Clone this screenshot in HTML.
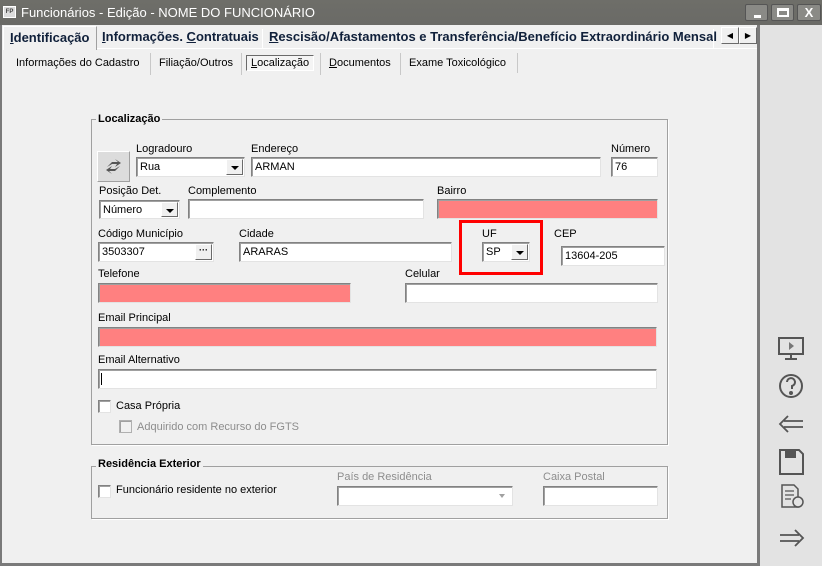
<!DOCTYPE html><html><head><meta charset="utf-8"><style>
*{box-sizing:border-box;margin:0;padding:0}
body{width:822px;height:566px;position:relative;background:#f0f0f0;font-family:"Liberation Sans",sans-serif;font-size:11px;color:#000;overflow:hidden}
.a{position:absolute;white-space:nowrap}
.in{position:absolute;background:#fff;border:1px solid;border-color:#828282 #e3e3e3 #e3e3e3 #828282;box-shadow:inset 1px 1px 0 #a0a0a0;padding:3px 0 0 3px;font-size:11px}
.pk{background:#ff8080}
.dd{position:absolute;right:1px;top:1px;bottom:1px;width:17px;background:#f0f0f0;border:1px solid;border-color:#fff #6a6a6a #6a6a6a #fff}
.dd:after{content:"";position:absolute;left:4px;top:6px;border-left:4px solid transparent;border-right:4px solid transparent;border-top:4px solid #000}
.dd.el:after{display:none}
.dd.dis{border:none;background:#fff}
.dd.dis:after{border-top-color:#a0a0a0;border-left-width:3px;border-right-width:3px;left:5px}
.gb{position:absolute;border:1px solid #a0a0a0;box-shadow:1px 1px 0 #fff}
.lg{position:absolute;font-weight:bold;background:#f0f0f0;padding:0 2px}
.cb{position:absolute;width:13px;height:13px;background:#fff;border:1px solid;border-color:#828282 #e3e3e3 #e3e3e3 #828282;box-shadow:inset 1px 1px 0 #a0a0a0}
.st{position:absolute;top:53px;height:22px;border-left:1px solid #c8c8c8;padding:4px 8px 0;font-size:11px}
u{text-decoration:underline}
.tb{position:absolute;top:29px;font-weight:bold;font-size:13px;color:#10203a}
.sep{position:absolute;top:29px;width:1px;height:19px;background:#a0a0a0;border-right:1px solid #fff}
</style></head><body>
<div class="a" style="left:0;top:0;width:822px;height:25px;background:linear-gradient(#6e6e69,#6a6a66)"></div>
<div class="a" style="left:3px;top:6px;width:13px;height:12px;background:#dcdcdc;border:1px solid #fff;font-size:6px;font-weight:bold;color:#444;line-height:10px;text-align:center">FP</div>
<div class="a" style="left:21px;top:5px;color:#fff;font-size:13px">Funcionários - Edição - NOME DO FUNCIONÁRIO</div>
<div class="a" style="left:745px;top:4px;width:23px;height:17px;border:1px solid #555;background:#8a8a86;border-radius:2px"><div class="a" style="left:8px;top:10px;width:7px;height:3px;background:#fff"></div></div>
<div class="a" style="left:771px;top:4px;width:23px;height:17px;border:1px solid #555;background:#8a8a86;border-radius:2px"><div class="a" style="left:5px;top:3px;width:12px;height:9px;border:2px solid #fff;border-top-width:3px"></div></div>
<div class="a" style="left:797px;top:4px;width:24px;height:17px;border:1px solid #555;background:#8a8a86;border-radius:2px;color:#fff;font-weight:bold;font-size:13px;text-align:center;line-height:15px">X</div>
<div class="a" style="left:757px;top:25px;width:3px;height:541px;background:#7a7a7a"></div>
<div class="a" style="left:760px;top:25px;width:62px;height:541px;background:#e3e3e3"></div>
<div class="a" style="left:0;top:25px;height:541px;background:#7a7a7a;width:2px"></div>
<div class="a" style="left:0;top:563px;width:760px;height:3px;background:#7a7a7a"></div>
<div class="a" style="left:3px;top:48px;width:754px;height:1px;background:#fff"></div>
<div class="a" style="left:3px;top:26px;width:94px;height:24px;background:#f0f0f0;border:1px solid #fff;border-right-color:#a0a0a0;border-bottom:none"></div>
<div class="tb" style="left:10px;top:30px"><u>I</u>dentificação</div>
<div class="tb" style="left:102px"><u>I</u>nformações. <u>C</u>ontratuais</div>
<div class="sep" style="left:262px"></div>
<div class="tb" style="left:269px"><u>R</u>escisão/Afastamentos e Transferência/Benefício Extraordinário Mensal</div>
<div class="sep" style="left:713px"></div>
<div class="a" style="left:721px;top:27px;width:18px;height:17px;background:#f0f0f0;border:1px solid;border-color:#fff #6a6a6a #6a6a6a #fff;font-size:8px;text-align:center;line-height:15px">◀</div>
<div class="a" style="left:739px;top:27px;width:18px;height:17px;background:#f0f0f0;border:1px solid;border-color:#fff #6a6a6a #6a6a6a #fff;font-size:8px;text-align:center;line-height:15px">▶</div>
<div class="st" style="left:8px;border-left:none">Informações do Cadastro</div>
<div class="st" style="left:150px">Filiação/Outros</div>
<div class="st" style="left:241px;border-left:1px solid #c8c8c8"><span style="display:inline-block;border:1px solid;border-color:#6a6a6a #fff #fff #6a6a6a;padding:1px 4px;margin:-4px -4px 0;background:#f4f4f4"><u>L</u>ocalização</span></div>
<div class="st" style="left:320px"><u>D</u>ocumentos</div>
<div class="st" style="left:400px">Exame Toxicológico</div>
<div class="a" style="left:517px;top:53px;width:1px;height:20px;background:#c8c8c8"></div>
<div class="gb" style="left:91px;top:119px;width:577px;height:326px"></div>
<div class="lg" style="left:96px;top:113px">Localização</div>
<div class="a" style="left:97px;top:151px;width:33px;height:31px;background:#dcdcdc;border:1px solid;border-color:#fff #a0a0a0 #a0a0a0 #fff"><svg width="31" height="29"><path d="M9 15 L14 10 L20 10 L17 7 L23 11 L17 15 L19 12 L14 12 Z M22 14 L17 19 L11 19 L14 22 L8 18 L14 14 L12 17 L17 17 Z" fill="#555"/></svg></div>
<div class="a" style="left:136px;top:143px">Logradouro</div>
<div class="in" style="left:136px;top:157px;width:109px;height:20px">Rua<div class="dd"></div></div>
<div class="a" style="left:251px;top:143px">Endereço</div>
<div class="in" style="left:251px;top:157px;width:350px;height:20px">ARMAN</div>
<div class="a" style="left:611px;top:143px">Número</div>
<div class="in" style="left:611px;top:157px;width:47px;height:20px">76</div>
<div class="a" style="left:99px;top:185px">Posição Det.</div>
<div class="in" style="left:99px;top:200px;width:81px;height:19px">Número<div class="dd"></div></div>
<div class="a" style="left:188px;top:185px">Complemento</div>
<div class="in" style="left:188px;top:199px;width:236px;height:20px"></div>
<div class="a" style="left:437px;top:185px">Bairro</div>
<div class="in pk" style="left:437px;top:199px;width:221px;height:20px"></div>
<div class="a" style="left:98px;top:228px">Código Município</div>
<div class="in" style="left:98px;top:242px;width:116px;height:20px">3503307<div class="dd el" style="font-size:9px;text-align:center;line-height:10px;font-weight:bold">···</div></div>
<div class="a" style="left:239px;top:228px">Cidade</div>
<div class="in" style="left:239px;top:242px;width:213px;height:20px">ARARAS</div>
<div class="a" style="left:459px;top:220px;width:84px;height:55px;border:3px solid #f00"></div>
<div class="a" style="left:482px;top:228px">UF</div>
<div class="in" style="left:482px;top:242px;width:48px;height:20px">SP<div class="dd"></div></div>
<div class="a" style="left:554px;top:228px">CEP</div>
<div class="in" style="left:561px;top:246px;width:104px;height:20px">13604-205</div>
<div class="a" style="left:98px;top:268px">Telefone</div>
<div class="in pk" style="left:98px;top:283px;width:253px;height:20px"></div>
<div class="a" style="left:405px;top:268px">Celular</div>
<div class="in" style="left:405px;top:283px;width:253px;height:20px"></div>
<div class="a" style="left:98px;top:312px">Email Principal</div>
<div class="in pk" style="left:98px;top:327px;width:559px;height:20px"></div>
<div class="a" style="left:98px;top:354px">Email Alternativo</div>
<div class="in" style="left:98px;top:369px;width:559px;height:20px"><div class="a" style="left:2px;top:3px;width:1px;height:12px;background:#000"></div></div>
<div class="cb" style="left:98px;top:400px"></div>
<div class="a" style="left:116px;top:400px">Casa Própria</div>
<div class="cb" style="left:119px;top:420px;background:#f0f0f0;border-color:#b0b0b0"></div>
<div class="a" style="left:137px;top:421px;color:#8d8d8d">Adquirido com Recurso do FGTS</div>
<div class="gb" style="left:91px;top:466px;width:577px;height:53px"></div>
<div class="lg" style="left:96px;top:458px">Residência Exterior</div>
<div class="cb" style="left:98px;top:485px"></div>
<div class="a" style="left:116px;top:484px">Funcionário residente no exterior</div>
<div class="a" style="left:337px;top:471px;color:#8d8d8d">País de Residência</div>
<div class="in" style="left:337px;top:486px;width:176px;height:20px"><div class="dd dis"></div></div>
<div class="a" style="left:543px;top:471px;color:#8d8d8d">Caixa Postal</div>
<div class="in" style="left:543px;top:486px;width:115px;height:20px"></div>
<svg class="a" style="left:776px;top:335px" width="32" height="220" fill="none" stroke="#555" stroke-width="2">
<rect x="3" y="3" width="24" height="16"/><path d="M15 19v4M9 24h12"/><path d="M13 7l5 4-5 4z" fill="#777" stroke="none"/>
<circle cx="15" cy="51" r="11"/><path d="M11 47a4 4 0 1 1 5 4v3" /><circle cx="15" cy="58" r="1" fill="#555"/>
<path d="M27 86H8M27 92H8M12 81l-8 8 8 8" stroke-width="1.8"/>
<path d="M4 115h19l4 4v20H4z"/><rect x="10" y="115" width="9" height="7" fill="#555"/>
<path d="M6 150h12l4 4v18H6z" stroke-width="1.5"/><path d="M9 156h9M9 160h9M9 164h6" stroke-width="1.2"/><circle cx="22" cy="167" r="5" fill="#e3e3e3" stroke-width="1.5"/>
<path d="M4 200h19M4 206h19M19 195l8 8-8 8" stroke-width="1.8"/>
</svg>
</body></html>
